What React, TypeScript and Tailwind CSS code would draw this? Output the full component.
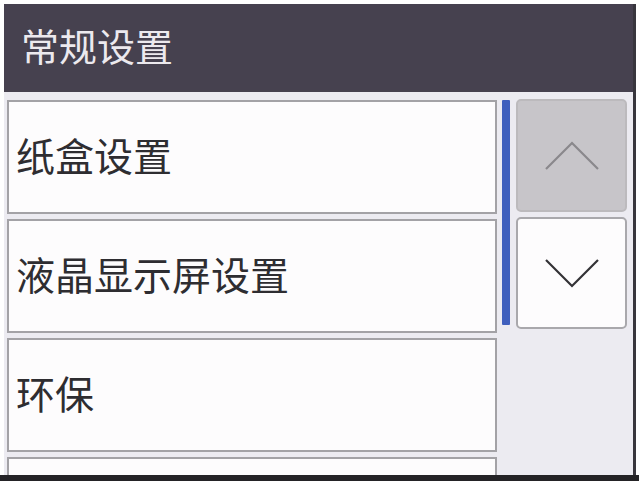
import React from "react";

const items = ["纸盒设置", "液晶显示屏设置", "环保", ""];

const Chevron = ({ up, color }: { up?: boolean; color: string }) => (
  <svg width="56" height="30" viewBox="0 0 56 30" fill="none">
    <path
      d={up ? "M2 28 L28 2 L54 28" : "M2 2 L28 28 L54 2"}
      stroke={color}
      strokeWidth="2.2"
    />
  </svg>
);

export default function App() {
  return (
    <div
      className="w-[639px] h-[481px] bg-white flex flex-col overflow-hidden"
      style={{ fontFamily: '"Noto Sans CJK SC", "Noto Sans", sans-serif' }}
    >
      <div className="ml-[4px] mt-[4px] w-[632px] h-[471px] border-r-[3px] border-[#38363d] bg-[#ecebf1] flex flex-col overflow-hidden">
        {/* Header */}
        <div className="h-[88px] shrink-0 bg-[#46414f] flex items-center pl-[17px] pb-[6px]">
          <span className="text-[38px] leading-none text-[#ece9ee]">常规设置</span>
        </div>

        <div className="flex pt-[7px] pl-[3px]">
          {/* List */}
          <div className="w-[490px] flex flex-col gap-[5px] pt-[1px]">
            {items.map((t, i) => (
              <div
                key={i}
                className="h-[114px] shrink-0 bg-[#fdfcfd] border-2 border-[#a3a2a6] flex items-center pl-[7px] pb-[5px]"
              >
                <span className="text-[39px] leading-none text-[#2e2d31]">{t}</span>
              </div>
            ))}
          </div>

          {/* Scroll bar */}
          <div className="ml-[5px] pt-[1px]">
            <div className="w-[8px] h-[225px] bg-[#3f5fbd] rounded-[1px]" />
          </div>

          {/* Buttons */}
          <div className="ml-[6px] flex flex-col gap-[5px]">
            <div className="w-[111px] h-[113px] bg-[#c7c5c9] border-2 border-[#bcbabd] rounded-[5px] flex items-center justify-center">
              <Chevron up color="#8a888c" />
            </div>
            <div className="w-[111px] h-[112px] bg-[#fdfcfd] border-2 border-[#a9a8ac] rounded-[5px] flex items-center justify-center">
              <Chevron color="#333236" />
            </div>
          </div>
        </div>
      </div>
      <div className="h-[6px] bg-[#242326]" />
    </div>
  );
}
